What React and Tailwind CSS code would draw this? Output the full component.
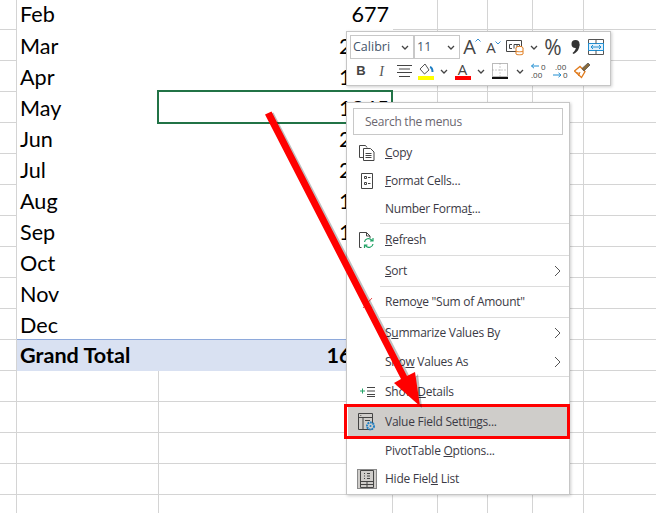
import React from "react";

const months = [
  ["Feb", "677"],
  ["Mar", "2134"],
  ["Apr", "1598"],
  ["May", "1345"],
  ["Jun", "2076"],
  ["Jul", "2213"],
  ["Aug", "1467"],
  ["Sep", "1382"],
  ["Oct", "915"],
  ["Nov", "843"],
  ["Dec", "762"],
];

const GridTail = ({ h }) => (
  <>
    <div className={`${h} border-r border-b border-[#d4d4d4]`} />
    <div className={`${h} border-r border-b border-[#d4d4d4]`} />
    <div className={`${h} border-r border-b border-[#d4d4d4]`} />
    <div className={`${h} border-r border-b border-[#d4d4d4]`} />
    <div className={`${h} border-b border-[#d4d4d4]`} />
  </>
);

const Sheet = () => (
  <div className="grid grid-cols-[17px_142px_234px_45px_50px_45px_51px_72px] font-['Lato',sans-serif] text-[21.6px] text-black">
    {months.map(([m, v], i) => {
      const h = i === 0 ? "h-[30px]" : "h-[31px]";
      const pad = i === 0 ? "pb-[2px]" : i === 10 ? "pb-0 border-b border-[#8ea9db]" : "pb-[1px]";
      return (
        <React.Fragment key={m}>
          <div className={`${h} border-r border-b border-[#d4d4d4]`} />
          <div className={`${h} flex items-end col-span-2 justify-between pr-[4px] pl-[3px] leading-[28px] ${pad}`}>
            <span>{m}</span>
            <span>{v}</span>
          </div>
          <GridTail h={h} />
        </React.Fragment>
      );
    })}
    <div className="h-[31px] border-r border-b border-[#d4d4d4]" />
    <div className="h-[31px] col-span-2 bg-[#d9e1f2] flex items-center justify-between pr-[4px] pl-[3px] font-bold">
      <span>Grand Total</span>
      <span>16712</span>
    </div>
    <GridTail h="h-[31px]" />
    {[0, 1, 2, 3, 4].map((r) => (
      <React.Fragment key={r}>
        <div className="h-[31px] border-r border-b border-[#d4d4d4]" />
        <div className="h-[31px] border-r border-b border-[#d4d4d4]" />
        <div className="h-[31px] border-r border-b border-[#d4d4d4]" />
        <GridTail h="h-[31px]" />
      </React.Fragment>
    ))}
  </div>
);

const Chevron = ({ className = "" }) => (
  <svg width="8" height="5" viewBox="0 0 8 5" fill="none" stroke="#444" strokeWidth="1.3" className={className}>
    <path d="M1 1l3 3 3-3" />
  </svg>
);

const Combo = ({ w, children }) => (
  <div className={`${w} h-[24px] border border-[#c8c8c8] bg-white flex items-center justify-between pl-[2px] pr-[4px] text-[#44546a] text-[12.5px]`}>
    <span>{children}</span>
    <Chevron />
  </div>
);

const Tool = ({ w, children, className = "" }) => (
  <div className={`${w} h-[24px] flex items-center justify-center shrink-0 ${className}`}>{children}</div>
);

const MiniToolbar = () => (
  <div className="absolute left-[346px] top-[31px] w-[265px] h-[55px] bg-white border border-[#c6c6c6] shadow-[1px_1px_3px_rgba(0,0,0,0.2)] pl-[3px] pt-[3px] font-['Open_Sans',sans-serif]">
    <div className="flex items-center h-[24px]">
      <Combo w="w-[64px]">Calibri</Combo>
      <Combo w="w-[46px]">11</Combo>
      <Tool w="w-[24px]">
        <span className="relative text-[20px] text-[#444] leading-none pr-[5px]">A
          <svg width="6" height="4" viewBox="0 0 6 4" fill="none" stroke="#3a8fd0" strokeWidth="1" className="absolute right-0 top-[1px]"><path d="M0.5 3.5L3 1l2.500 2.500" /></svg>
        </span>
      </Tool>
      <Tool w="w-[19px]">
        <span className="relative text-[15px] text-[#444] leading-none pr-[5px]">A
          <svg width="6" height="4" viewBox="0 0 6 4" fill="none" stroke="#3a8fd0" strokeWidth="1" className="absolute right-0 top-[1px]"><path d="M0.5 0.5L3 3l2.500-2.500" /></svg>
        </span>
      </Tool>
      <Tool w="w-[24px]">
        <svg width="19" height="17" viewBox="0 0 19 17" fill="none">
          <path d="M0.5 1.5h15v11h-15z" stroke="#444" />
          <path d="M6 5.5H3.500v4H6M8 9.500v-4h3v4M11 5.500h2.500v4" stroke="#444" />
          <ellipse cx="13.5" cy="9" rx="3.500" ry="1.700" fill="#fff" stroke="#e07a1b" />
          <path d="M10 9v6c0 1 7 1 7 0V9M10 12c0 1 7 1 7 0" fill="#fff" stroke="#e07a1b" />
        </svg>
      </Tool>
      <Tool w="w-[13px]"><Chevron /></Tool>
      <Tool w="w-[26px]"><span className="text-[21px] text-[#444] leading-none">%</span></Tool>
      <Tool w="w-[18px]">
        <svg width="9" height="16" viewBox="0 0 9 16" fill="#333">
          <circle cx="4.5" cy="5" r="4" />
          <path d="M8.500 5c0 5-2 8-6 10l-1-1c2-1.500 3.500-4 3.500-6z" />
        </svg>
      </Tool>
      <Tool w="w-[24px]">
        <svg width="16" height="16" viewBox="0 0 16 16" fill="none">
          <path d="M0.500 0.500h15v15h-15z" stroke="#555" />
          <path d="M0.500 4.500h15v7h-15z" fill="#e4f1fa" stroke="#1f8ed2" />
          <path d="M3.500 8h9M5 6L3 8l2 2M11 6l2 2-2 2" stroke="#1f8ed2" />
          <path d="M8 0.500v4M8 11.500v4" stroke="#555" />
        </svg>
      </Tool>
    </div>
    <div className="flex items-center h-[24px] pl-[1px]">
      <Tool w="w-[20px]"><span className="text-[13px] font-bold text-[#444] font-['Liberation_Sans',sans-serif]">B</span></Tool>
      <Tool w="w-[21px]"><span className="text-[14px] italic text-[#555] font-['Liberation_Serif',serif]">I</span></Tool>
      <Tool w="w-[24px]">
        <svg width="15" height="14" viewBox="0 0 15 14" stroke="#444"><path d="M0 1.500h15M2 5h11M0 8.500h15M2 12.500h11" /></svg>
      </Tool>
      <Tool w="w-[20px]">
        <svg width="16" height="17" viewBox="0 0 16 17" fill="none">
          <path d="M7 1L2 6l4.500 5L11 7z" stroke="#555" />
          <path d="M12 4c2 .5 2.500 2 2.500 5" stroke="#1f7fc4" strokeWidth="2" />
          <rect y="13" width="16" height="4" fill="#ffff00" />
        </svg>
      </Tool>
      <Tool w="w-[16px]"><Chevron /></Tool>
      <Tool w="w-[21px]">
        <span className="relative w-[16px] h-[18px] text-center text-[15px] leading-[14px] text-[#444]">A
          <span className="absolute left-0 bottom-0 w-[16px] h-[4px] bg-[#ff0000]" />
        </span>
      </Tool>
      <Tool w="w-[16px]"><Chevron /></Tool>
      <Tool w="w-[22px]">
        <svg width="16" height="16" viewBox="0 0 16 16" fill="none">
          <path d="M0.500 0.500h15v13h-15z" stroke="#777" strokeDasharray="1 1" />
          <path d="M8 0.500v13M0.500 7h15" stroke="#999" strokeDasharray="1 2" />
          <path d="M0 15h16" stroke="#111" strokeWidth="2" />
        </svg>
      </Tool>
      <Tool w="w-[17px]"><Chevron /></Tool>
      <Tool w="w-[22px]">
        <svg width="18" height="17" viewBox="0 0 18 17" fill="none" className="overflow-visible">
          <path d="M9 3H1.500M4 0.800L1.500 3 4 5.200" stroke="#1f8ed2" />
          <text x="11" y="7" fontSize="8" fill="#444" fontFamily="Open Sans">0</text>
          <text x="1" y="15" fontSize="8" fill="#444" fontFamily="Open Sans">.00</text>
        </svg>
      </Tool>
      <Tool w="w-[22px]">
        <svg width="18" height="17" viewBox="0 0 18 17" fill="none" className="overflow-visible">
          <text x="3" y="7" fontSize="8" fill="#444" fontFamily="Open Sans">.00</text>
          <path d="M1 12h8M6.500 9.800L9 12l-2.500 2.200" stroke="#1f8ed2" />
          <text x="11" y="15" fontSize="8" fill="#444" fontFamily="Open Sans">0</text>
        </svg>
      </Tool>
      <Tool w="w-[20px]">
        <svg width="17" height="16" viewBox="0 0 17 16" fill="none">
          <path d="M0.500 8L6 3.500l5 5-3.500 6z" fill="#fff" stroke="#e07a1b" strokeWidth="1.300" />
          <path d="M2 9.500l4 1M4.500 13L6 9" stroke="#e07a1b" />
          <path d="M8 5.500L14 0l2 2-6 6z" fill="#8a6a3a" stroke="#555" strokeWidth="0.800" />
        </svg>
      </Tool>
    </div>
  </div>
);

const ic = {
  copy: (
    <svg width="16" height="16" viewBox="0 0 16 16" fill="none" stroke="#444">
      <path d="M6 12.500H0.500V0.500h6l1.500 2" />
      <path d="M4.500 3.500h7l3.500 3.500v8.500H4.500z" fill="#fff" />
      <path d="M6.500 8.500h6M6.500 10.500h6M6.500 12.500h6" />
    </svg>
  ),
  format: (
    <svg width="13" height="16" viewBox="0 0 13 16" fill="none" stroke="#444">
      <path d="M0.500 0.500h11v15h-11z" />
      <path d="M3.500 3.500h2v2h-2zM3.500 9.500h2v2h-2zM7 4.500h2.500M7 10.500h2.500" />
    </svg>
  ),
  refresh: (
    <svg width="16" height="16" viewBox="0 0 16 16" fill="none">
      <path d="M2.500 15.500H0.500V0.500h7l3.500 3.500v2" stroke="#444" />
      <path d="M7.500 0.500v3.500h3.500" stroke="#444" />
      <path d="M5.500 10a4 4 0 0 1 7-2l1.500 1M14 6v3h-3M14 12a4 4 0 0 1-7 2l-1.500-1M5.500 16v-3h3" stroke="#21a366" strokeWidth="1.200" />
    </svg>
  ),
  remove: (
    <svg width="11" height="12" viewBox="0 0 11 12" stroke="#e84b4b" fill="none">
      <path d="M1 1l9 10M10 1L1 11" />
    </svg>
  ),
  details: (
    <svg width="15" height="10" viewBox="0 0 15 10" fill="none">
      <path d="M0 4h5M2.500 1.500v5" stroke="#21a366" />
      <path d="M7 0.500h8M7 4h8M7 7.500h8M7 9.500h8" stroke="#444" />
    </svg>
  ),
  value: (
    <svg width="18" height="18" viewBox="0 0 18 18" fill="none">
      <path d="M0.500 0.500h14v16h-14z" stroke="#444" />
      <path d="M0.500 4.500h14M5 4.500v12M7 7.500h5" stroke="#444" />
      <circle cx="2.800" cy="2.500" r="0.600" fill="#444" />
      <circle cx="12.500" cy="13" r="3.500" fill="#cfcdca" stroke="#1f7fc4" strokeWidth="2" strokeDasharray="1.800 0.800" />
      <circle cx="12.500" cy="13" r="1" fill="#1f7fc4" />
    </svg>
  ),
  hide: (
    <svg width="14" height="18" viewBox="0 0 14 18" fill="none" stroke="#444">
      <path d="M0.500 0.500h13v17h-13z" />
      <path d="M0.500 11.500h13M0.500 14.500h13M7 11.500v6" />
      <path d="M4 3.500h1M7 3.500h3M4 6h1M7 6h3M4 8.500h1M7 8.500h3" />
    </svg>
  ),
};

const Item = ({ icon, children, arrow, sep, h = "h-[28px]", hot, box }) => (
  <div className={`${h} flex items-stretch ${hot ? "bg-[#cfcdca] mx-[1px]" : ""}`}>
    <div className={`${hot ? "w-[32px] pl-[6px]" : "w-[33px] pl-[7px]"} flex items-center justify-center shrink-0`}>
      {box ? <span className="w-[20px] h-[20px] shrink-0 bg-[#cfcdca] border border-[#8a8a8a] flex items-center justify-center">{icon}</span> : icon}
    </div>
    <div className={`flex-1 flex items-center justify-between pl-[5px] pr-[4px] ${sep ? "border-b border-[#dcdcdc]" : ""}`}>
      <span className="whitespace-nowrap">{children}</span>
      {arrow && (
        <svg width="7" height="12" viewBox="0 0 7 12" fill="none" stroke="#555" className="mr-[4px]"><path d="M1 1l5 5-5 5" /></svg>
      )}
    </div>
  </div>
);

const ContextMenu = () => (
  <div className="absolute left-[346px] top-[102px] w-[224px] h-[393px] bg-white border border-[#c6c6c6] shadow-[1px_1px_3px_rgba(0,0,0,0.2)] font-['Open_Sans',sans-serif] text-[12px] tracking-[-0.25px] text-[#3b3a45]">
    <div className="px-[6px] pt-[5px] pb-[4px]">
      <div className="h-[27px] border border-[#c8c8c8] flex items-center pl-[11px] text-[#6b6770]">Search the menus</div>
    </div>
    <Item icon={ic.copy}><u>C</u>opy</Item>
    <Item icon={ic.format}><u>F</u>ormat Cells...</Item>
    <Item sep h="h-[29px]">Number Forma<u>t</u>...</Item>
    <Item icon={ic.refresh} sep h="h-[32px]"><u>R</u>efresh</Item>
    <Item sep arrow h="h-[31px]"><u>S</u>ort</Item>
    <Item icon={ic.remove} sep h="h-[31px]">Remo<u>v</u>e "Sum of Amount"</Item>
    <Item arrow h="h-[29px]">S<u>u</u>mmarize Values By</Item>
    <Item arrow sep h="h-[30px]">Sho<u>w</u> Values As</Item>
    <Item icon={ic.details} h="h-[30px]">Show <u>D</u>etails</Item>
    <Item icon={ic.value} hot h="h-[30px]">Value Field Setti<u>n</u>gs...</Item>
    <Item h="h-[28px]">PivotTable <u>O</u>ptions...</Item>
    <Item icon={ic.hide} box h="h-[28px]">Hide Fiel<u>d</u> List</Item>
    <div className="absolute left-[-3px] top-[301px] w-[226px] h-[35px] border-[3px] border-[#ff0000]" />
  </div>
);

const Arrow = () => (
  <svg className="absolute left-0 top-0 pointer-events-none" width="656" height="513" viewBox="0 0 656 513">
    <g fill="#000" opacity="0.25" transform="translate(2 1)">
      <path d="M265 114.500L271.500 111.500L410 380L416 373L420 407L394 384L403 383z" />
    </g>
    <path d="M265 114.500L271.500 111.500L407 376L415 372L420 406L394 383L401 379z" fill="#ff0000" />
  </svg>
);

export default function App() {
  return (
    <div className="relative w-[656px] h-[513px] overflow-hidden bg-white">
      <Sheet />
      <div className="absolute left-[157px] top-[90px] w-[236px] h-[34px] border-2 border-[#217346]" />
      <MiniToolbar />
      <ContextMenu />
      <Arrow />
    </div>
  );
}
